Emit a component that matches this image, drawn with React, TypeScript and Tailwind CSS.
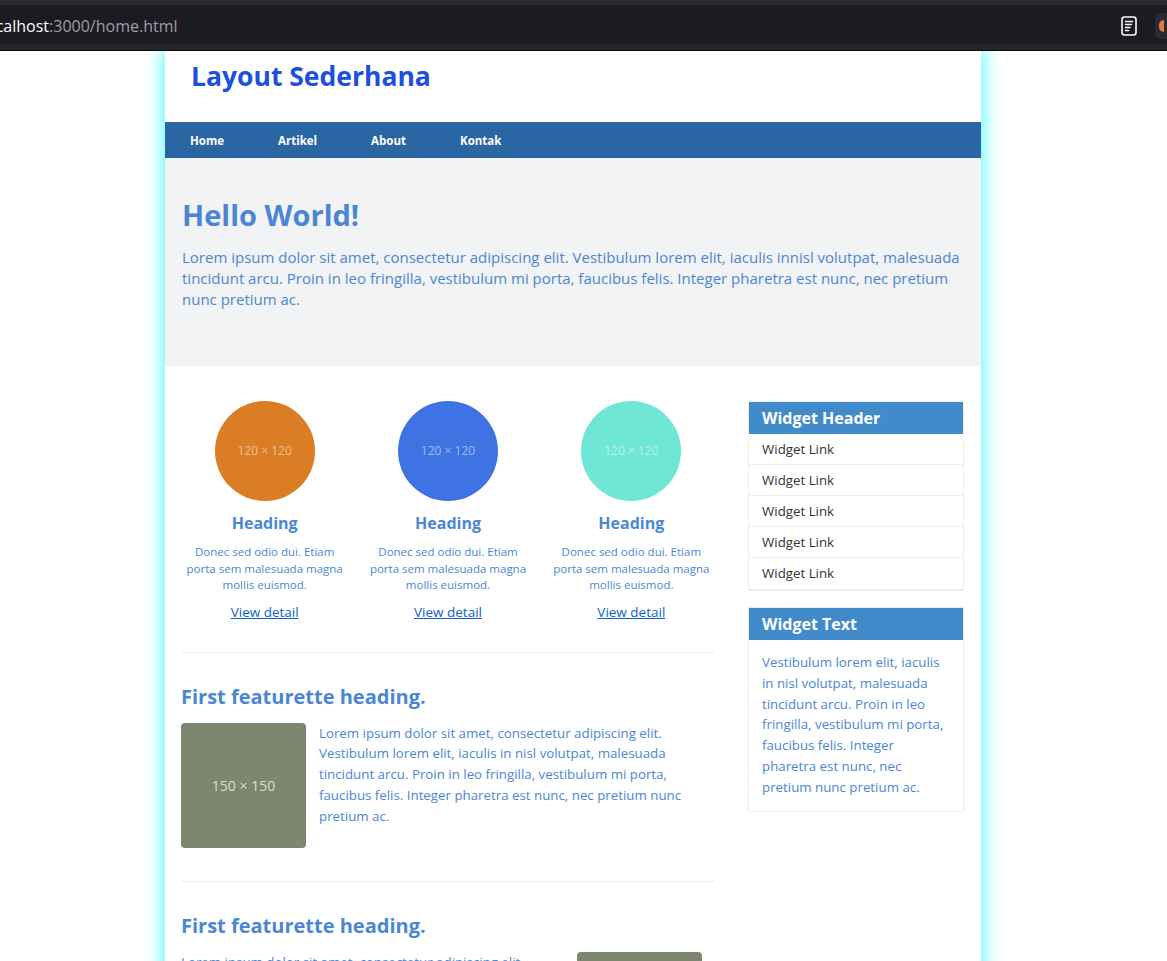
const blue = "text-[#4a86d4]";

function ReaderIcon() {
  return (
    <svg width="16" height="20" viewBox="0 0 16 20" fill="none">
      <rect x="1" y="1" width="14" height="18" rx="2.5" stroke="#fbfbfe" strokeWidth="1.6" />
      <path d="M4.5 5.5h7M4.5 8.5h6M4.5 11.5h4.5M4.5 14.5h3" stroke="#fbfbfe" strokeWidth="1.5" strokeLinecap="round" />
    </svg>
  );
}

function BrowserBar() {
  return (
    <div className="h-[51px] bg-[#2b2a33] flex flex-col">
      <div className="h-[5px]" />
      <div className="h-[39px] bg-[#1c1b22] flex items-center pt-[3px] relative overflow-hidden">
        <span className="ml-[-18px] text-[16px] font-['Open_Sans',sans-serif] whitespace-nowrap">
          <span className="text-[#fbfbfe]">localhost</span>
          <span className="text-[#9e9ea6]">:3000/home.html</span>
        </span>
        <div className="ml-auto mr-[30px] flex items-center gap-[18px]">
          <ReaderIcon />
          <div className="w-[12px] h-[26px] bg-[#2b2a33] rounded-l-[5px] -mr-[30px] flex items-center pl-[4px]">
            <div className="w-[5px] h-[12px] rounded-l-full bg-[#e07b3c]" />
          </div>
        </div>
      </div>
      <div className="h-[6px] bg-[#26252c]" />
      <div className="h-[1px] bg-[#0b0b0d]" />
    </div>
  );
}

function Circle({ color }: { color: string }) {
  return (
    <div className={`w-[100px] h-[100px] rounded-full flex items-center justify-center text-[12px] text-white/50 ${color}`}>
      120 × 120
    </div>
  );
}

function Feature({ color }: { color: string }) {
  return (
    <div className="flex flex-col items-center text-center">
      <Circle color={color} />
      <h3 className={`mt-[10px] text-[16px] leading-[24px] font-bold ${blue}`}>Heading</h3>
      <p className={`mt-[9px] text-[11.5px] leading-[16.5px] px-[6px] ${blue}`}>
        Donec sed odio dui. Etiam porta sem malesuada magna mollis euismod.
      </p>
      <a href="#" className="mt-[8px] text-[13.5px] leading-[20px] text-[#0b62c8] underline">
        View detail
      </a>
    </div>
  );
}

function Placeholder() {
  return (
    <div className="w-[125px] h-[125px] shrink-0 rounded-[4px] bg-[#7d876f] flex items-center justify-center text-[14px] text-[#d9ddd2]">
      150 × 150
    </div>
  );
}

const loremText =
  "Lorem ipsum dolor sit amet, consectetur adipiscing elit. Vestibulum lorem elit, iaculis in nisl volutpat, malesuada tincidunt arcu. Proin in leo fringilla, vestibulum mi porta, faucibus felis. Integer pharetra est nunc, nec pretium nunc pretium ac.";

export default function App() {
  return (
    <div className="w-[1167px] h-[961px] overflow-hidden bg-white font-['Open_Sans',sans-serif]">
      <BrowserBar />
      <div className="h-[910px] overflow-hidden">
        <div className="ml-[165px] w-[816px] min-h-[910px] bg-white shadow-[0_0_16px_3px_#5ffbff]">
          {/* header */}
          <header className="h-[71px] pt-[9px] pl-[26px]">
            <h1 className="text-[26.5px] leading-[32px] font-bold text-[#1d4fe0]">Layout Sederhana</h1>
          </header>
          <nav className="h-[36px] bg-[#2a66a3] flex items-center pt-[1px] pl-[25px] gap-[54px] text-[11.5px] font-bold text-white">
            <a href="#">Home</a>
            <a href="#">Artikel</a>
            <a href="#">About</a>
            <a href="#">Kontak</a>
          </nav>
          {/* hero */}
          <section className="bg-[#f2f3f5] px-[17px] pt-[40px] pb-[56px]">
            <h2 className={`text-[29px] leading-[33px] font-bold ${blue}`}>Hello World!</h2>
            <p className={`mt-[16px] text-[15px] leading-[21px] ${blue}`}>
              Lorem ipsum dolor sit amet, consectetur adipiscing elit. Vestibulum lorem elit, iaculis innisl volutpat,
              malesuada tincidunt arcu. Proin in leo fringilla, vestibulum mi porta, faucibus felis. Integer pharetra est
              nunc, nec pretium nunc pretium ac.
            </p>
          </section>
          {/* content */}
          <div className="flex pt-[35px] pl-[16px] pr-[17px] gap-[33px]">
            <main className="w-[534px]">
              <div className="grid grid-cols-3 mx-[-8px]">
                <Feature color="bg-[#db7d25]" />
                <Feature color="bg-[#3f73e3]" />
                <Feature color="bg-[#70e6d5]" />
              </div>
              <hr className="mt-[30px] border-[#eeeeee]" />
              <h2 className={`mt-[30px] text-[20px] leading-[28px] font-bold ${blue}`}>First featurette heading.</h2>
              <div className="mt-[12px] flex gap-[13px]">
                <Placeholder />
                <p className={`w-[371px] text-[13.3px] leading-[20.8px] ${blue}`}>{loremText}</p>
              </div>
              <hr className="mt-[33px] border-[#eeeeee]" />
              <h2 className={`mt-[30px] text-[20px] leading-[28px] font-bold ${blue}`}>First featurette heading.</h2>
              <div className="mt-[12px] flex gap-[13px] pr-[13px]">
                <p className={`flex-1 text-[13.3px] leading-[20.8px] ${blue}`}>{loremText}</p>
                <Placeholder />
              </div>
            </main>
            <aside className="w-[216px]">
              <div className="border border-[#eeeeee] border-b-2">
                <div className="h-[32px] bg-[#428bca] flex items-center pl-[13px] text-[16px] font-bold text-white">
                  Widget Header
                </div>
                {[0, 1, 2, 3, 4].map((i) => (
                  <div
                    key={i}
                    className={`h-[31px] flex items-center pl-[13px] pt-[1px] text-[13.3px] text-[#333333] ${i < 4 ? "border-b border-[#eeeeee]" : ""}`}
                  >
                    Widget Link
                  </div>
                ))}
              </div>
              <div className="mt-[16px] border border-[#eeeeee]">
                <div className="h-[32px] bg-[#428bca] flex items-center pl-[13px] text-[16px] font-bold text-white">
                  Widget Text
                </div>
                <p className={`pl-[13px] pr-[17px] pt-[12px] pb-[13px] text-[13.3px] leading-[20.8px] ${blue}`}>
                  Vestibulum lorem elit, iaculis in nisl volutpat, malesuada tincidunt arcu. Proin in leo fringilla,
                  vestibulum mi porta, faucibus felis. Integer pharetra est nunc, nec pretium nunc pretium ac.
                </p>
              </div>
            </aside>
          </div>
        </div>
      </div>
    </div>
  );
}
